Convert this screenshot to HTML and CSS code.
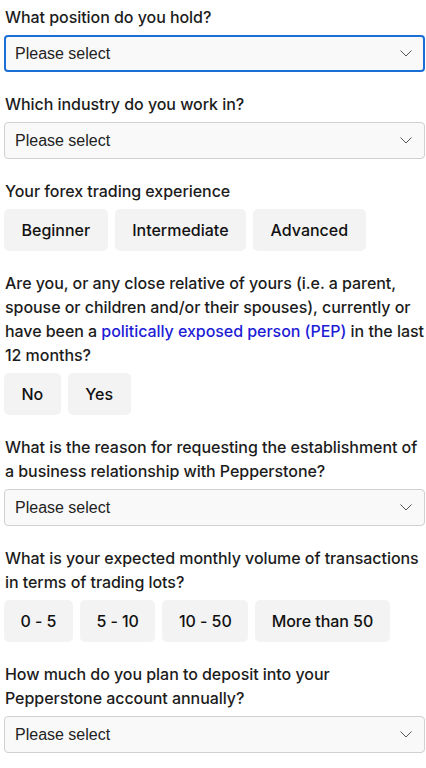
FILE: index.html
```html
<!DOCTYPE html>
<html lang="en">
<head>
<meta charset="utf-8">
<title>Questionnaire</title>
<link rel="stylesheet" href="styles.css">
</head>
<body>
<form class="form">
  <div class="field">
    <label class="label">What position do you hold?</label>
    <div class="select select--focus"><span>Please select</span><svg class="chev" viewBox="0 0 12 7" width="12" height="7"><path d="M0.5 0.5 L6 6 L11.5 0.5" fill="none" stroke="#555" stroke-width="1"/></svg></div>
  </div>
  <div class="field">
    <label class="label">Which industry do you work in?</label>
    <div class="select"><span>Please select</span><svg class="chev" viewBox="0 0 12 7" width="12" height="7"><path d="M0.5 0.5 L6 6 L11.5 0.5" fill="none" stroke="#555" stroke-width="1"/></svg></div>
  </div>
  <div class="field">
    <label class="label">Your forex trading experience</label>
    <div class="options">
      <button type="button" class="opt">Beginner</button>
      <button type="button" class="opt">Intermediate</button>
      <button type="button" class="opt">Advanced</button>
    </div>
  </div>
  <div class="field">
    <label class="label">Are you, or any close relative of yours (i.e. a parent, spouse or children and/or their spouses), currently or have been a <a class="link" href="#">politically exposed person (PEP)</a> in the last 12 months?</label>
    <div class="options">
      <button type="button" class="opt">No</button>
      <button type="button" class="opt">Yes</button>
    </div>
  </div>
  <div class="field">
    <label class="label">What is the reason for requesting the establishment of a business relationship with Pepperstone?</label>
    <div class="select"><span>Please select</span><svg class="chev" viewBox="0 0 12 7" width="12" height="7"><path d="M0.5 0.5 L6 6 L11.5 0.5" fill="none" stroke="#555" stroke-width="1"/></svg></div>
  </div>
  <div class="field">
    <label class="label">What is your expected monthly volume of transactions in terms of trading lots?</label>
    <div class="options">
      <button type="button" class="opt opt--num">0 - 5</button>
      <button type="button" class="opt opt--num">5 - 10</button>
      <button type="button" class="opt opt--num">10 - 50</button>
      <button type="button" class="opt opt--num">More than 50</button>
    </div>
  </div>
  <div class="field">
    <label class="label">How much do you plan to deposit into your Pepperstone account annually?</label>
    <div class="select"><span>Please select</span><svg class="chev" viewBox="0 0 12 7" width="12" height="7"><path d="M0.5 0.5 L6 6 L11.5 0.5" fill="none" stroke="#555" stroke-width="1"/></svg></div>
  </div>
</form>
</body>
</html>
```
FILE: styles.css
```css
* { box-sizing: border-box; }
html, body { margin: 0; padding: 0; background: #fff; }
body {
  font-family: Inter, "Noto Sans", sans-serif;
  color: #1c1c1c;
}
.form {
  display: flex;
  flex-direction: column;
  gap: 20px;
  padding: 5px 1px 0 4px;
}
.field {
  display: flex;
  flex-direction: column;
  gap: 6px;
}
.label {
  display: block;
  font-size: 16px;
  line-height: 24px;
  font-weight: 500;
  letter-spacing: -0.05px;
  padding-left: 1px;
}
.link { color: #1d1dd6; text-decoration: none; }
.select {
  height: 37px;
  display: flex;
  align-items: center;
  justify-content: space-between;
  padding: 0 12px 0 10px;
  border: 1px solid #d0d0d0;
  border-radius: 4px;
  background: #f9f9f9;
  font-family: "Liberation Sans", Arial, sans-serif;
  font-size: 16px;
  color: #222;
}
.select--focus {
  border: 2px solid #1a6fd6;
  padding-left: 9px;
  padding-right: 11px;
}
.chev { display: block; }
.options {
  display: flex;
  gap: 7px;
}
.opt {
  height: 42px;
  padding: 0 17.5px;
  border: 0;
  border-radius: 5px;
  background: #f3f3f3;
  font-family: Inter, "Noto Sans", sans-serif;
  font-size: 16px;
  font-weight: 500;
  letter-spacing: 0;
  color: #111;
}
.opt--num {
  padding: 0 16.5px;
  letter-spacing: -0.05px;
}
```
